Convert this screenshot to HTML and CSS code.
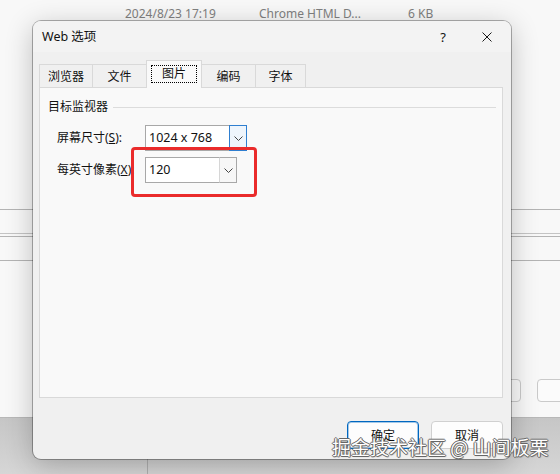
FILE: index.html
```html
<!DOCTYPE html>
<html lang="zh-CN">
<head>
  <meta charset="UTF-8">
  <title>Web 选项</title>
  <meta name="viewport" content="width=device-width, initial-scale=1.0">
  <link rel="stylesheet" href="styles.css">
</head>
<body>
  <div class="desktop">
    <!-- explorer window behind the dialog -->
    <div class="explorer">
      <div class="file-row">
        <span class="col-date">2024/8/23 17:19</span>
        <span class="col-type">Chrome HTML D...</span>
        <span class="col-size">6 KB</span>
      </div>
      <div class="rule rule-a"></div>
      <div class="rule rule-b"></div>
      <div class="rule rule-c"></div>
      <div class="explorer-actions">
        <span class="ghost-btn"></span>
        <span class="ghost-btn"></span>
      </div>
    </div>
    <div class="statusbar">
      <span class="status-split"></span>
    </div>

    <div class="dialog">
      <div class="titlebar">
        <span class="title">Web 选项</span>
        <span class="title-help">?</span>
        <span class="title-close">
          <svg width="10" height="10" viewBox="0 0 10 10">
            <path d="M0.5 0.5 L9.5 9.5 M9.5 0.5 L0.5 9.5" stroke="#1a1a1a" stroke-width="1" fill="none"/>
          </svg>
        </span>
      </div>

      <div class="tabs">
        <span class="tab w53">浏览器</span>
        <span class="tab w54">文件</span>
        <span class="tab active"><span class="focus">图片</span></span>
        <span class="tab w53">编码</span>
        <span class="tab w51">字体</span>
      </div>

      <div class="panel">
        <div class="group-title">
          <span>目标监视器</span>
          <span class="group-line"></span>
        </div>

        <div class="field">
          <label>屏幕尺寸(<u>S</u>):</label>
          <div class="combo wide">
            <span class="combo-text">1024 x 768</span>
            <span class="combo-btn hot">
              <svg width="9" height="5" viewBox="0 0 9 5"><polyline points="0.5,0.5 4.5,4.5 8.5,0.5" fill="none" stroke="#444" stroke-width="1"/></svg>
            </span>
          </div>
        </div>

        <div class="field">
          <label>每英寸像素(<u>X</u>):</label>
          <div class="combo">
            <span class="combo-text">120</span>
            <span class="combo-btn">
              <svg width="9" height="5" viewBox="0 0 9 5"><polyline points="0.5,0.5 4.5,4.5 8.5,0.5" fill="none" stroke="#444" stroke-width="1"/></svg>
            </span>
          </div>
        </div>
      </div>

      <div class="dialog-footer">
        <button class="btn default">确定</button>
        <button class="btn">取消</button>
      </div>
    </div>

    <div class="highlight"></div>
    <div class="watermark">掘金技术社区 @ 山间板栗</div>
  </div>
</body>
</html>
```

FILE: styles.css
```css
:root {
  --dialog-bg: #f0f0f0;
  --panel-bg: #f9f9f9;
  --line: #d9d9d9;
  --accent: #0067c0;
  --text: #111;
}

* {
  box-sizing: border-box;
}

body {
  margin: 0;
  font-family: "Segoe UI", "Noto Sans", "Noto Sans CJK SC", sans-serif;
  color: var(--text);
}

.desktop {
  position: relative;
  width: 560px;
  height: 474px;
  overflow: hidden;
  background: #d0d0d0;
}

/* background explorer */

.explorer {
  height: 417px;
  background: #f8f8f8;
  display: flex;
  flex-direction: column;
}

.file-row {
  height: 26px;
  display: flex;
  align-items: center;
  padding-left: 125px;
  font-size: 12px;
  color: #808080;
}

.col-date {
  width: 134px;
}

.col-type {
  width: 149px;
}

.rule {
  border-top: 1px solid #b4b4b4;
}

.rule-a {
  margin-top: 183px;
}

.rule-b {
  margin-top: 23px;
  height: 4px;
  border-bottom: 1px solid #b4b4b4;
  border-top-color: #c4c4c4;
}

.rule-c {
  margin-top: 23px;
}

.explorer-actions {
  margin-top: auto;
  padding: 0 0 15px 440px;
  display: flex;
  gap: 16px;
}

.ghost-btn {
  flex: none;
  width: 81px;
  height: 23px;
  border: 1px solid #cacaca;
  border-radius: 4px;
  background: #fbfbfb;
}

.statusbar {
  height: 57px;
  display: flex;
  background: linear-gradient(#c6c6c6, #d6d6d6);
  border-top: 1px solid #b8b8b8;
}

.status-split {
  margin-left: 147px;
  border-left: 1px solid #b0b0b0;
}

/* dialog window */

.dialog {
  position: absolute;
  left: 33px;
  top: 21px;
  width: 478px;
  height: 438px;
  background: var(--dialog-bg);
  border-radius: 8px;
  box-shadow: 0 0 0 1px rgba(0, 0, 0, 0.3), 0 6px 28px rgba(0, 0, 0, 0.24);
  display: flex;
  flex-direction: column;
}

.titlebar {
  height: 31px;
  display: flex;
  align-items: center;
  padding-left: 9px;
  font-size: 12.5px;
  line-height: 16px;
  background: #f3f3f3;
  border-radius: 8px 8px 0 0;
}

.title {
  flex: 1;
}

.title-help {
  width: 40px;
  text-align: center;
  font-size: 13px;
}

.title-close {
  width: 48px;
  display: flex;
  justify-content: center;
}

.tabs {
  margin-top: 8px;
  padding-left: 6px;
  height: 28px;
  display: flex;
  align-items: flex-end;
  margin-bottom: -1px;
  font-size: 12px;
  line-height: 16px;
}

.tab {
  height: 24px;
  display: flex;
  align-items: center;
  justify-content: center;
  background: #f0f0f0;
  border: 1px solid var(--line);
  border-right: 0;
  border-bottom: 0;
}

.tab.w53 { width: 53px; }
.tab.w54 { width: 54px; }
.tab.w51 { width: 51px; border-right: 1px solid var(--line); }

.tab.active {
  position: relative;
  width: 56px;
  height: 28px;
  background: var(--panel-bg);
  border-right: 1px solid var(--line);
  padding-bottom: 1px;
}

.tab.active + .tab {
  border-left: 0;
}

.focus {
  padding: 0 10px;
  border: 1px dotted #000;
}

.panel {
  height: 311px;
  margin: 0 8px 0 6px;
  background: var(--panel-bg);
  border: 1px solid var(--line);
  padding: 11px 6px 0 8px;
  font-size: 12px;
  line-height: 16px;
}

.group-title {
  display: flex;
  align-items: center;
}

.group-line {
  flex: 1;
  margin-left: 5px;
  border-top: 1px solid #dcdcdc;
}

.field {
  display: flex;
  align-items: center;
  padding-left: 9px;
  margin-top: 6px;
}

.group-title + .field {
  margin-top: 10px;
}

.field label {
  width: 88px;
}

.combo {
  width: 92px;
  height: 26px;
  display: flex;
}

.combo.wide {
  width: 102px;
}

.combo-text {
  flex: 1;
  display: flex;
  align-items: center;
  padding-left: 3px;
  background: #fff;
  border: 1px solid #a8a8a8;
  border-right: 0;
  font-size: 12.5px;
}

.combo-btn {
  width: 18px;
  display: flex;
  align-items: center;
  justify-content: center;
  background: #f7f7f7;
  border: 1px solid #a8a8a8;
  border-left-color: #d6d6d6;
}

.combo-btn.hot {
  background: #eef5fc;
  border-color: #2f7fd0;
}

.dialog-footer {
  margin-top: auto;
  padding: 0 8px 10px 0;
  display: flex;
  justify-content: flex-end;
  gap: 12px;
}

.btn {
  width: 72px;
  height: 28px;
  border: 1px solid #d0d0d0;
  border-radius: 4px;
  background: #fdfdfd;
  font-family: inherit;
  font-size: 12px;
  color: var(--text);
  padding: 0;
}

.btn.default {
  border-color: var(--accent);
  box-shadow: inset 0 0 0 1px rgba(0, 103, 192, 0.35);
}

/* annotation overlays */

.highlight {
  position: absolute;
  left: 131px;
  top: 147px;
  width: 126px;
  height: 50px;
  border: 3px solid #ea2b2b;
  border-radius: 4px;
}

.watermark {
  position: absolute;
  left: 332px;
  top: 435px;
  font-family: "Noto Sans CJK SC", sans-serif;
  font-size: 19px;
  line-height: 24px;
  color: #fff;
  text-shadow: 1px 0 0 #666, -1px 0 0 #666, 0 1px 0 #666, 0 -1px 0 #666, 1px 1px 1px rgba(0, 0, 0, 0.35);
}
```
